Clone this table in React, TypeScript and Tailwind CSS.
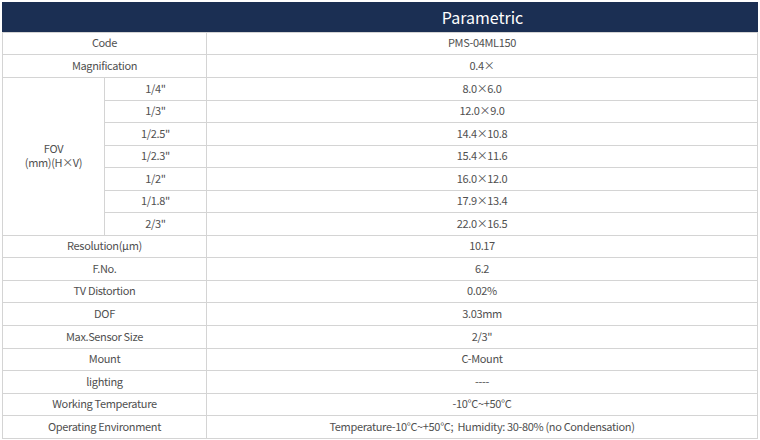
import React from 'react';

type Row = { label: string; value: string };

const topRows: Row[] = [
  { label: 'Code', value: 'PMS-04ML150' },
  { label: 'Magnification', value: '0.4×' },
];

const fovRows: Row[] = [
  { label: '1/4"', value: '8.0×6.0' },
  { label: '1/3"', value: '12.0×9.0' },
  { label: '1/2.5"', value: '14.4×10.8' },
  { label: '1/2.3"', value: '15.4×11.6' },
  { label: '1/2"', value: '16.0×12.0' },
  { label: '1/1.8"', value: '17.9×13.4' },
  { label: '2/3"', value: '22.0×16.5' },
];

const bottomRows: Row[] = [
  { label: 'Resolution(μm)', value: '10.17' },
  { label: 'F.No.', value: '6.2' },
  { label: 'TV Distortion', value: '0.02%' },
  { label: 'DOF', value: '3.03mm' },
  { label: 'Max.Sensor Size', value: '2/3"' },
  { label: 'Mount', value: 'C-Mount' },
  { label: 'lighting', value: '----' },
  { label: 'Working Temperature', value: '-10°C~+50°C' },
  { label: 'Operating Environment', value: 'Temperature-10°C~+50°C;  Humidity: 30-80% (no Condensation)' },
];

const cell = 'flex items-center justify-center pb-[2px] border-r border-b border-[#d4d4d4] whitespace-pre';

function App() {
  return (
    <div
      className="w-[760px] h-[440px] bg-white pt-[2px] pl-[2px] text-[11px] tracking-[-0.35px] text-[#505050]"
      style={{ fontFamily: '"Noto Sans CJK SC", "Noto Sans", sans-serif' }}
    >
      {/* 表头 */}
      <div className="grid grid-cols-[205px_551px] h-[30px] w-[756px] bg-[#1b2f53] text-white text-[16px] tracking-normal">
        <div />
        <div className="flex items-center justify-center">Parametric</div>
      </div>

      <div className="grid w-[756px] grid-cols-[102px_102px_551px] grid-rows-[22px_23px_23px_22px_23px_22px_23px_22px_23px_22px_23px_22px_23px_23px_22px_23px_22px_23px] border-l border-t border-[#d4d4d4]">
        {topRows.map((r) => (
          <React.Fragment key={r.label}>
            <div className={`${cell} col-span-2`}>{r.label}</div>
            <div className={cell}>{r.value}</div>
          </React.Fragment>
        ))}

        <div className={`${cell} row-span-7 flex-col leading-[14px] pb-[4px]`}>
          <span>FOV</span>
          <span>(mm)(H×V)</span>
        </div>
        {fovRows.map((r) => (
          <React.Fragment key={r.label}>
            <div className={cell}>{r.label}</div>
            <div className={cell}>{r.value}</div>
          </React.Fragment>
        ))}

        {bottomRows.map((r) => (
          <React.Fragment key={r.label}>
            <div className={`${cell} col-span-2`}>{r.label}</div>
            <div className={cell}>{r.value}</div>
          </React.Fragment>
        ))}
      </div>
    </div>
  );
}

export default App;
